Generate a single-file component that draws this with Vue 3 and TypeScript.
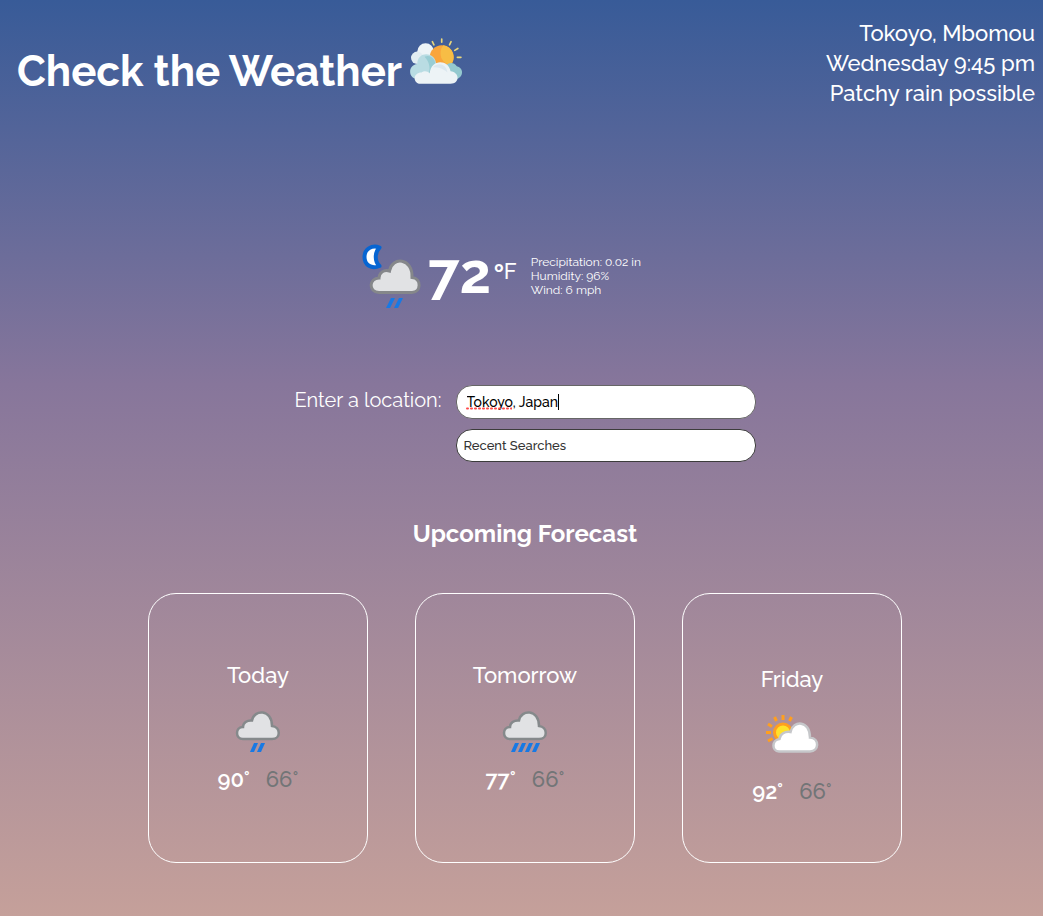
<script setup lang="ts">
import { ref } from 'vue'

interface Day {
  name: string
  icon: 'light' | 'heavy' | 'sunny'
  high: number
  low: number
}

const location = ref('Tokoyo, Japan')
const recent = ref('')

const drops: Record<string, number[]> = {
  light: [11, 18],
  heavy: [5, 12, 19, 26],
}

const days: Day[] = [
  { name: 'Today', icon: 'light', high: 90, low: 66 },
  { name: 'Tomorrow', icon: 'heavy', high: 77, low: 66 },
  { name: 'Friday', icon: 'sunny', high: 92, low: 66 },
]
</script>

<template>
  <div class="page">
    <header class="top">
      <div class="brand">
        <h1>Check the Weather</h1>
        <svg class="logo" viewBox="0 0 50 46" aria-hidden="true">
          <g stroke="#e9d67c" stroke-width="1.6" stroke-linecap="round">
            <path d="M21.5 3.5l1.5 3M30.5 1v3M39.5 3.5L38 6.500M46 10l-3 1.800M49 18.500h-3.500" />
          </g>
          <circle cx="15" cy="13" r="8" fill="#eef4f7" />
          <circle cx="7" cy="19" r="6" fill="#e2edf2" />
          <circle cx="30.500" cy="18.500" r="11.500" fill="#f9a53c" />
          <path d="M32 7a11.500 11.500 0 0 1 7 19q-6-1-9-7-2-7 2-12z" fill="#f7bd45" />
          <path d="M31 34c1-8 9-14 14-7 6 1 7 9 1 12H31z" fill="#94c9cf" />
          <path d="M6 39c-8-1-8-13 1-14 0-13 17-12 18-1 8 5 5 14-2 15z" fill="#b9dce3" />
          <path d="M14 18c7-3 13 5 9 11l-5 5c2-6 0-12-4-16z" fill="#99cdd4" />
          <path d="M10 44c-8-1-7-11 1-11 3-2 6-1 8 1 1-14 18-14 20-2 9 1 9 12 0 12z" fill="#edf3f6" />
          <path d="M22 28c5-5 13-3 14 5-4-4-9-5-14-5z" fill="#dce8ef" />
        </svg>
      </div>
      <div class="place">
        <div>Tokoyo, Mbomou</div>
        <div>Wednesday 9:45 pm</div>
        <div>Patchy rain possible</div>
      </div>
    </header>

    <main>
      <section class="current" aria-label="Current weather">
        <svg class="now-icon" viewBox="0 0 62 66" role="img" aria-label="Night rain">
          <path d="M18.500 3.500C11 .5 3.500 5 3.500 13s7 12.500 15 9C13.500 17.500 13.500 8.500 18.500 3.500z" fill="#fff" stroke="#0765d2" stroke-width="4" stroke-linejoin="round" />
          <path d="M18 48.500h33c9 0 10-14 0-15C52 14 31 12 28.500 27 23 25 18 29 18 34c-10 0-11 14 0 14.500z" fill="#e1e2e4" stroke="#85878a" stroke-width="3" />
          <path d="M30 54h4l-5 10h-4zM38 54h4l-5 10h-4z" fill="#1879e4" />
        </svg>
        <span class="temp">72</span>
        <span class="unit"><span class="degree">º</span>F</span>
        <div class="details">
          <div>Precipitation: 0.02 in</div>
          <div>Humidity: 96%</div>
          <div>Wind: 6 mph</div>
        </div>
      </section>

      <form class="search" @submit.prevent>
        <label for="location">Enter a location:</label>
        <div class="fields">
          <div class="field">
            <input id="location" v-model="location" type="text" spellcheck="false" autocomplete="off" />
            <svg class="spelling" viewBox="0 0 46 3" aria-hidden="true">
              <path d="M1 1.500h45" stroke="#ff4a4a" stroke-width="2" stroke-linecap="round" stroke-dasharray="1 3" />
            </svg>
            <span class="caret" aria-hidden="true"></span>
          </div>
          <select v-model="recent" aria-label="Recent Searches">
            <option value="">Recent Searches</option>
          </select>
        </div>
      </form>

      <h2>Upcoming Forecast</h2>
      <section class="cards">
        <article v-for="day in days" :key="day.name" class="card" :class="day.icon">
          <h3>{{ day.name }}</h3>
          <svg v-if="day.icon === 'sunny'" class="sun-icon" viewBox="0 0 54 40" role="img" aria-label="Partly cloudy">
            <path d="M18 1v5M9.500 3l2 4M3 10l4 2.500M1 18.500h5M3 27l4.500-2.500M26.500 3l-2 4" stroke="#ff9f1f" stroke-width="3" />
            <circle cx="18" cy="18.500" r="8.500" fill="#ffe22b" stroke="#ff9f1f" stroke-width="3" />
            <path d="M14 37.500h31c9 0 10-13 0-14C45 6 28 6 25.500 18 20 17 15 20 14.500 25c-8 1-8 12-.5 12.500z" fill="#fff" stroke="#c6c7ca" stroke-width="2.500" />
          </svg>
          <svg v-else class="rain-icon" viewBox="0 0 46 44" role="img" aria-label="Rain">
            <path d="M8 29h29c9 0 9-12 0-13C37-1 19-1 17 10.500 12 10 8 13 8 17c-8 0-8 12 0 12z" fill="#e1e2e4" stroke="#85898b" stroke-width="2.500" />
            <path v-for="x in drops[day.icon]" :key="x" :d="`M${x + 8} 33h4l-4 9h-4z`" fill="#1879e4" />
          </svg>
          <p class="range"><span class="high">{{ day.high }}°</span><span class="low">{{ day.low }}°</span></p>
        </article>
      </section>
    </main>
  </div>
</template>

<style>
body {
  margin: 0;
}
</style>

<style scoped>
.page {
  box-sizing: border-box;
  min-height: 100vh;
  padding: 18px 8px 53px;
  color: #fff;
  font-family: Raleway, Lato, sans-serif;
  font-variant-numeric: oldstyle-nums;
  background: linear-gradient(#385b98, #87769b 42%, #c5a09a);
}

h1,
h2,
h3,
p {
  margin: 0;
}

.top {
  display: flex;
  justify-content: space-between;
}

.brand {
  display: flex;
  align-items: flex-start;
  gap: 8px;
  padding: 20px 0 0 9px;
}

h1 {
  padding-top: 7px;
  font-size: 42px;
  font-weight: 700;
  line-height: 54px;
}

.logo {
  width: 52px;
  height: 48px;
}

.place {
  font-size: 22px;
  font-weight: 500;
  line-height: 30px;
  text-align: right;
}

main {
  display: flex;
  flex-direction: column;
  align-items: center;
  padding-left: 7px;
}

.current {
  display: flex;
  align-items: flex-start;
  margin-top: 136px;
  padding-right: 48px;
}

.now-icon {
  width: 62px;
  height: 66px;
}

.temp {
  margin-left: 5px;
  font-size: 56px;
  font-weight: 700;
  line-height: 58px;
}

.unit {
  margin-left: 3px;
  padding-top: 14px;
  font-size: 22px;
  font-weight: 500;
  line-height: 26px;
}

.degree {
  font-weight: 700;
}

.details {
  margin-left: 14px;
  padding-top: 11px;
  font-size: 12px;
  font-weight: 400;
  line-height: 14px;
}

.search {
  display: flex;
  gap: 14px;
  margin-top: 75px;
}

.search label {
  font-size: 20px;
  line-height: 30px;
}

.fields {
  display: flex;
  flex-direction: column;
  gap: 10px;
}

.field {
  position: relative;
}

input,
select {
  box-sizing: border-box;
  display: block;
  width: 300px;
  height: 34px;
  border: 1px solid #666;
  border-radius: 16px;
  background: #fff;
  font-family: inherit;
  outline: none;
}

input {
  padding: 0 10px;
  color: #000;
  font-size: 14px;
  font-weight: 500;
}

select {
  appearance: none;
  height: 33px;
  padding: 0 7px;
  border-color: #3c3c3c;
  color: #333;
  font-size: 13px;
  font-weight: 500;
}

.spelling {
  position: absolute;
  left: 10px;
  top: 22px;
  width: 46px;
  height: 3px;
}

.caret {
  position: absolute;
  left: 102px;
  top: 9px;
  width: 1px;
  height: 16px;
  background: #000;
}

h2 {
  margin-top: 56px;
  font-size: 24px;
  font-weight: 700;
  line-height: 32px;
}

.cards {
  display: flex;
  flex-wrap: wrap;
  justify-content: center;
  gap: 47px;
  margin-top: 43px;
}

.card {
  box-sizing: border-box;
  display: flex;
  flex-direction: column;
  align-items: center;
  justify-content: center;
  width: 220px;
  min-height: 270px;
  padding-bottom: 2px;
  border: 1px solid #fff;
  border-radius: 28px;
}

.card.sunny {
  padding-top: 16px;
}

h3 {
  font-size: 22px;
  font-weight: 500;
  line-height: 28px;
}

.rain-icon {
  width: 46px;
  height: 44px;
  margin: 21px 0 11px;
}

.sun-icon {
  width: 54px;
  height: 40px;
  margin: 21px 0 23px;
}

.range {
  display: flex;
  gap: 16px;
  font-size: 22px;
  font-weight: 500;
  line-height: 28px;
}

.high {
  font-weight: 600;
}

.low {
  color: #727577;
}
</style>
